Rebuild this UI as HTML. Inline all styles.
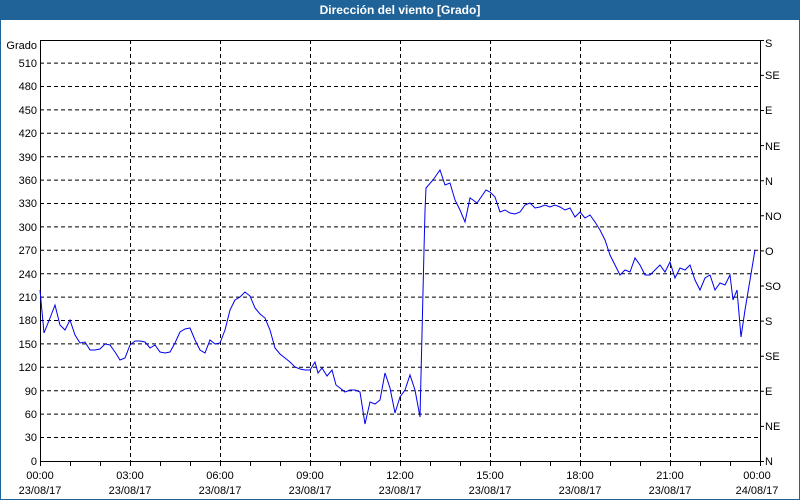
<!DOCTYPE html>
<html><head><meta charset="utf-8"><style>
html,body{margin:0;padding:0;background:#fff;}
body{width:800px;height:500px;overflow:hidden;position:relative;font-family:"Liberation Sans","DejaVu Sans",sans-serif;}
</style></head><body>
<svg width="800" height="500" xmlns="http://www.w3.org/2000/svg" style="position:absolute;left:0;top:0">
<rect x="0" y="0" width="800" height="500" fill="#fff"/>
<rect x="0" y="0" width="800" height="20" fill="#1f6399"/>
<rect x="0.5" y="0.5" width="799" height="499" fill="none" stroke="#1f6399"/>
<text x="400" y="14" fill="#fff" font-size="12" font-weight="bold" text-anchor="middle">Dirección del viento [Grado]</text>
<g stroke="#000" stroke-width="1" stroke-dasharray="4,3" fill="none">
<path d="M40 437.5H760M40 414.1H760M40 390.7H760M40 367.3H760M40 343.9H760M40 320.5H760M40 297.1H760M40 273.7H760M40 250.3H760M40 226.9H760M40 203.5H760M40 180.1H760M40 156.7H760M40 133.3H760M40 109.9H760M40 86.5H760M40 63.1H760"/>
<path d="M130.5 40V461M220.5 40V461M310.5 40V461M400.5 40V461M490.5 40V461M580.5 40V461M670.5 40V461"/>
</g>
<g stroke="#000" stroke-width="1" fill="none">
<rect x="40.5" y="40.5" width="720" height="421"/>
<path d="M70.5 461v5M100.5 461v5M130.5 461v5M160.5 461v5M190.5 461v5M220.5 461v5M250.5 461v5M280.5 461v5M310.5 461v5M340.5 461v5M370.5 461v5M400.5 461v5M430.5 461v5M460.5 461v5M490.5 461v5M520.5 461v5M550.5 461v5M580.5 461v5M610.5 461v5M640.5 461v5M670.5 461v5M700.5 461v5M730.5 461v5M40.5 461v5M760.5 461v5"/>
<path d="M760 461.5h4M760 426.4h4M760 391.3h4M760 356.2h4M760 321.1h4M760 286h4M760 250.9h4M760 215.8h4M760 180.7h4M760 145.6h4M760 110.5h4M760 75.4h4M760 40.5h4"/>
</g>
<g font-size="11" fill="#000" text-anchor="end">
<text x="37" y="49">Grado</text>
<text x="37" y="67">510</text><text x="37" y="90">480</text><text x="37" y="114">450</text><text x="37" y="137">420</text><text x="37" y="161">390</text><text x="37" y="184">360</text><text x="37" y="207">330</text><text x="37" y="231">300</text><text x="37" y="254">270</text><text x="37" y="278">240</text><text x="37" y="301">210</text><text x="37" y="324">180</text><text x="37" y="348">150</text><text x="37" y="371">120</text><text x="37" y="395">90</text><text x="37" y="418">60</text><text x="37" y="441">30</text><text x="37" y="465">0</text>
</g>
<g font-size="11" fill="#000">
<text x="765" y="465">N</text><text x="765" y="430">NE</text><text x="765" y="395">E</text><text x="765" y="360">SE</text><text x="765" y="325">S</text><text x="765" y="290">SO</text><text x="765" y="255">O</text><text x="765" y="220">NO</text><text x="765" y="185">N</text><text x="765" y="150">NE</text><text x="765" y="114">E</text><text x="765" y="79">SE</text><text x="765" y="47">S</text>
</g>
<g font-size="11" fill="#000" text-anchor="middle">
<text x="40" y="479">00:00</text><text x="40" y="494">23/08/17</text>
<text x="130" y="479">03:00</text><text x="130" y="494">23/08/17</text>
<text x="220" y="479">06:00</text><text x="220" y="494">23/08/17</text>
<text x="310" y="479">09:00</text><text x="310" y="494">23/08/17</text>
<text x="400" y="479">12:00</text><text x="400" y="494">23/08/17</text>
<text x="490" y="479">15:00</text><text x="490" y="494">23/08/17</text>
<text x="580" y="479">18:00</text><text x="580" y="494">23/08/17</text>
<text x="670" y="479">21:00</text><text x="670" y="494">23/08/17</text>
<text x="757" y="479">00:00</text><text x="757" y="494">24/08/17</text>
</g>
<polyline fill="none" stroke="#0000ee" stroke-width="1" points="40,290 44,333 50,318 55,305 60,325 65,330 70,320 75,335 80,343 85,342 90,350 95,350 100,349 105,344 110,345 115,352 120,360 125,358 130,345 135,341 140,341 145,342 150,348 155,345 160,352 165,353 170,352 175,343 180,332 185,329 190,328 195,340 200,350 205,353 210,340 215,344 220,343 225,330 230,310 235,300 240,297 245,292 250,296 255,308 260,314 265,318 270,330 275,348 280,354 285,358 290,362 295,367 300,369 305,370 310,370 315,362 318,373 322,368 327,376 332,370 336,385 340,388 345,392 350,390 355,390 360,392 365,424 370,402 375,404 380,400 385,373 390,388 395,413 400,397 405,390 410,375 415,390 420,417 424,250 425,211 426,188 433,180 440,170 445,185 450,183 455,200 460,210 465,222 470,198 473,200 477,203 486,190 490,192 495,197 500,212 505,210 510,213 515,214 520,212 525,205 530,203 535,208 540,207 545,205 550,207 555,205 560,207 565,210 570,208 575,217 580,212 585,218 590,215 595,222 600,230 605,240 610,255 615,265 620,275 625,270 630,272 635,258 640,265 645,275 650,275 655,270 660,265 665,272 670,262 675,278 680,268 685,270 690,265 695,280 700,290 705,278 710,275 715,290 720,283 725,285 730,275 733,300 737,290 741,337 745,310 750,280 755,250"/>
</svg>
</body></html>
